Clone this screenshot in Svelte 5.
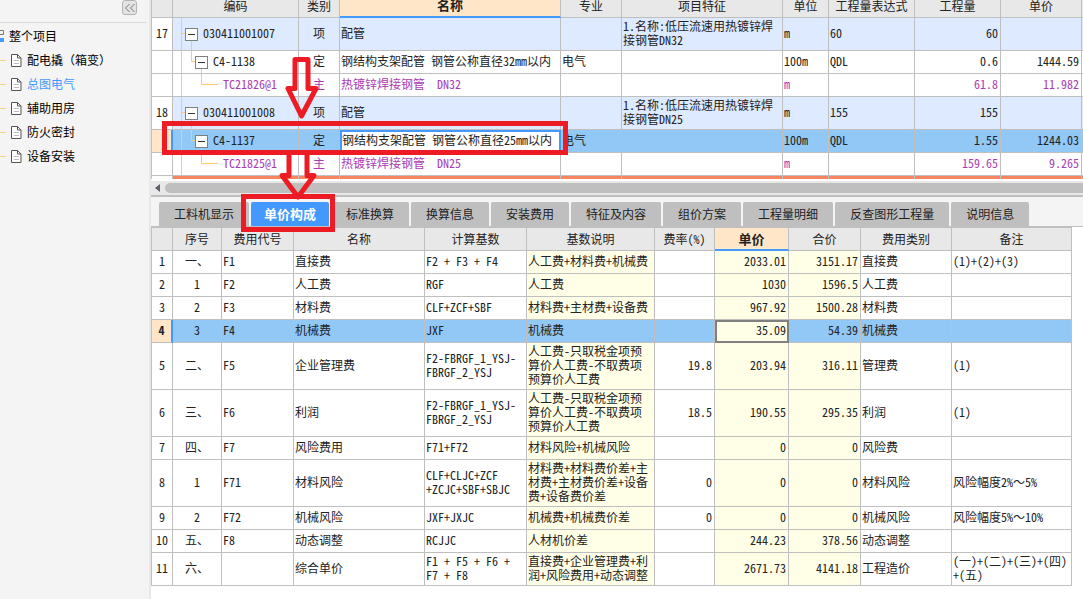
<script lang="ts">
	// Types/constants
	type Kind = 'item' | 'quota' | 'material' | 'section'

	type BillRow = {
		no?: string
		kind: Kind
		code?: string
		type?: string
		name?: string
		major?: string
		feature?: string
		unit?: string
		formula?: string
		quantity?: string
		price?: string
	}

	const projects = ['配电撬（箱变）', '总图电气', '辅助用房', '防火密封', '设备安装']

	const billColumns = ['', '编码', '类别', '名称', '专业', '项目特征', '单位', '工程量表达式', '工程量', '单价', '']

	const billRows: BillRow[] = [
		{ no: '17', kind: 'item', code: '030411001007', type: '项', name: '配管', feature: '1.名称:低压流速用热镀锌焊\n接钢管DN32', unit: 'm', formula: '60', quantity: '60' },
		{ kind: 'quota', code: 'C4-1138', type: '定', name: '钢结构支架配管 钢管公称直径32mm以内', major: '电气', unit: '100m', formula: 'QDL', quantity: '0.6', price: '1444.59' },
		{ kind: 'material', code: 'TC21826@1', type: '主', name: '热镀锌焊接钢管  DN32', unit: 'm', quantity: '61.8', price: '11.982' },
		{ no: '18', kind: 'item', code: '030411001008', type: '项', name: '配管', feature: '1.名称:低压流速用热镀锌焊\n接钢管DN25', unit: 'm', formula: '155', quantity: '155' },
		{ kind: 'quota', code: 'C4-1137', type: '定', name: '钢结构支架配管 钢管公称直径25mm以内', major: '电气', unit: '100m', formula: 'QDL', quantity: '1.55', price: '1244.03' },
		{ kind: 'material', code: 'TC21825@1', type: '主', name: '热镀锌焊接钢管  DN25', unit: 'm', quantity: '159.65', price: '9.265' },
		{ kind: 'section', feature: '1.名称:低压流速用热镀锌焊' },
	]

	const tabs = ['工料机显示', '单价构成', '标准换算', '换算信息', '安装费用', '特征及内容', '组价方案', '工程量明细', '反查图形工程量', '说明信息']

	const feeColumns = ['', '序号', '费用代号', '名称', '计算基数', '基数说明', '费率(%)', '单价', '合价', '费用类别', '备注']

	const overhead = '人工费-只取税金项预\n算价人工费-不取费项\n预算价人工费'

	const feeRows = [
		['一、', 'F1', '直接费', 'F2 + F3 + F4', '人工费+材料费+机械费', '', '2033.01', '3151.17', '直接费', '(1)+(2)+(3)'],
		['1', 'F2', '人工费', 'RGF', '人工费', '', '1030', '1596.5', '人工费', ''],
		['2', 'F3', '材料费', 'CLF+ZCF+SBF', '材料费+主材费+设备费', '', '967.92', '1500.28', '材料费', ''],
		['3', 'F4', '机械费', 'JXF', '机械费', '', '35.09', '54.39', '机械费', ''],
		['二、', 'F5', '企业管理费', 'F2-FBRGF_1_YSJ-\nFBRGF_2_YSJ', overhead, '19.8', '203.94', '316.11', '管理费', '(1)'],
		['三、', 'F6', '利润', 'F2-FBRGF_1_YSJ-\nFBRGF_2_YSJ', overhead, '18.5', '190.55', '295.35', '利润', '(1)'],
		['四、', 'F7', '风险费用', 'F71+F72', '材料风险+机械风险', '', '0', '0', '风险费', ''],
		['1', 'F71', '材料风险', 'CLF+CLJC+ZCF\n+ZCJC+SBF+SBJC', '材料费+材料费价差+主\n材费+主材费价差+设备\n费+设备费价差', '0', '0', '0', '材料风险', '风险幅度2%～5%'],
		['2', 'F72', '机械风险', 'JXF+JXJC', '机械费+机械费价差', '0', '0', '0', '机械风险', '风险幅度5%～10%'],
		['五、', 'F8', '动态调整', 'RCJJC', '人材机价差', '', '244.23', '378.56', '动态调整', ''],
		['六、', '', '综合单价', 'F1 + F5 + F6 +\nF7 + F8', '直接费+企业管理费+利\n润+风险费用+动态调整', '', '2671.73', '4141.18', '工程造价', '(一)+(二)+(三)+(四)\n+(五)'],
	]

	// State
	let activeProject = $state('总图电气')
	let activeTab = $state('单价构成')
	let billRow = $state(4)
	let feeRow = $state(3)
</script>


{#snippet guides(kind: Kind)}
	{#if kind === 'item'}
		<svg class="guides" width="25" height="32">
			<path d="M8.5 0V33M9 15.5h4M18.5 22V33" />
		</svg>
	{:else if kind === 'quota'}
		<svg class="guides" width="35" height="22">
			<path d="M8.5 0V23M18.5 0V10.5H22M28.5 17V23" />
		</svg>
	{:else if kind === 'material'}
		<svg class="guides" width="45" height="22">
			<path d="M8.5 0V23M28.5 0V10.5H45" />
		</svg>
	{/if}
{/snippet}


<div class="app">
	<aside>
		<div class="collapse">
			<button aria-label="收起">
				<svg width="12" height="10" viewBox="0 0 12 10">
					<path d="M5.5 1L1.5 5l4 4M10.5 1l-4 4 4 4" />
				</svg>
			</button>
		</div>

		<nav>
			<a class="root" href="#all">
				<svg width="5" height="14" viewBox="0 0 5 14">
					<path d="M0 1.5h3.500v4H0" fill="none" stroke="#777" />
					<path d="M0 9h4v4H0z" fill="#4499ff" />
				</svg>
				整个项目
			</a>
			{#each projects as project (project)}
				<a
					href="#{project}"
					class:active={project === activeProject}
					onclick={() => (activeProject = project)}
				>
					<span class="branch"></span>
					<svg width="11" height="13" viewBox="0 0 11 13">
						<path d="M.5.5h6L10 4v8.500H.5z" fill="#fff" stroke="#555" />
						<path d="M6.500.5v3.500H10" fill="none" stroke="#555" />
						<path d="M3 6.500h5M3 9.500h5" stroke="#bbb" />
					</svg>
					{project}
				</a>
			{/each}
		</nav>
	</aside>

	<main>
		<section class="bill">
			<table>
				<colgroup>
					<col class="w-no" /><col class="w-code" /><col class="w-type" /><col /><col class="w-major" />
					<col class="w-feature" /><col class="w-unit" /><col class="w-qty" /><col class="w-qty" />
					<col class="w-price" /><col class="w-edge" />
				</colgroup>
				<thead>
					<tr>
						{#each billColumns as column}
							<th class:current={column === '名称'}>{column}</th>
						{/each}
					</tr>
				</thead>
				<tbody>
					{#each billRows as row, i}
						<tr class={row.kind} class:selected={i === billRow} onclick={() => (billRow = i)}>
							<td class="no">{row.no ?? ''}</td>
							<td class="code">
								<div>
									{@render guides(row.kind)}
									{#if row.kind === 'item' || row.kind === 'quota'}
										<button class="toggle" aria-label="折叠"></button>
									{/if}
									<span>{row.code ?? ''}</span>
								</div>
							</td>
							<td class="center">{row.type ?? ''}</td>
							<td class:cursor={i === billRow}>{row.name ?? ''}</td>
							<td>{row.major ?? ''}</td>
							<td>{row.feature ?? ''}</td>
							<td>{row.unit ?? ''}</td>
							<td>{row.formula ?? ''}</td>
							<td class="number">{row.quantity ?? ''}</td>
							<td class="number">{row.price ?? ''}</td>
							<td></td>
						</tr>
					{/each}
				</tbody>
			</table>
		</section>

		<div class="scrollbar">
			<button aria-label="向左滚动"></button>
			<div class="thumb"></div>
		</div>

		<div class="tabs" role="tablist">
			{#each tabs as tab (tab)}
				<button
					role="tab"
					aria-selected={tab === activeTab}
					class:active={tab === activeTab}
					onclick={() => (activeTab = tab)}
				>{tab}</button>
			{/each}
		</div>

		<section class="fees">
			<table>
				<colgroup>
					<col class="w-no" /><col class="w-seq" /><col class="w-symbol" /><col /><col class="w-base" />
					<col class="w-note" /><col class="w-rate" /><col class="w-cost" /><col class="w-total" />
					<col class="w-kind" /><col class="w-remark" />
				</colgroup>
				<thead>
					<tr>
						{#each feeColumns as column}
							<th class:current={column === '单价'}>{column}</th>
						{/each}
					</tr>
				</thead>
				<tbody>
					{#each feeRows as row, i}
						<tr class:selected={i === feeRow} onclick={() => (feeRow = i)}>
							<td class="no">{i + 1}</td>
							{#each row as value, j}
								<td
									class:center={j === 0}
									class:computed={j === 4 || j === 6 || j === 7}
									class:number={j === 5 || j === 6 || j === 7}
									class:cursor={i === feeRow && j === 6}
								>{#each value.split(/(～)/) as part}{#if part === '～'}<span class="full">{part}</span>{:else}{part}{/if}{/each}</td>
							{/each}
						</tr>
					{/each}
				</tbody>
			</table>
		</section>
	</main>

	<svg class="marks" width="410" height="180" viewBox="160 55 410 180">
		<path d="M295 59.500h13V88.500H316L301.500 116L288 88.500H295z" />
		<path d="M289 155V175.500H282L298 197L314 175.500H307V155" />
		<path class="frame" d="M164.500 123.500h401v29h-401z" />
		<path class="frame" d="M243.500 196.500h89v33h-89z" />
	</svg>
</div>


<style>
	:global(body) {
		margin: 0;
		background: #fff;
	}

	.app {
		position: relative;
		display: flex;
		min-height: 100vh;
		overflow: hidden;
		font-family: 'Noto Sans CJK SC', sans-serif;
		font-size: 12px;
		line-height: 14px;
		color: #222;
	}

	button {
		font: inherit;
		padding: 0;
		border: none;
	}

	/* Sidebar */
	aside {
		flex: none;
		box-sizing: border-box;
		width: 151px;
		background: #f4f4f4;
		border-right: 2px solid #e8e8e8;
	}

	.collapse {
		display: flex;
		justify-content: flex-end;
		height: 22px;
		margin-right: 2px;
		padding-right: 10px;
		border-bottom: 1px solid #dcdcdc;

		& button {
			display: grid;
			place-items: center;
			width: 15px;
			height: 15px;
			background: #e4e4e4;
			border: 1px solid #b4b4b4;
			border-radius: 3px;
			box-sizing: border-box;
		}

		& path {
			fill: none;
			stroke: #777;
		}
	}

	nav {
		display: flex;
		flex-direction: column;
		padding-top: 1px;

		& a {
			display: flex;
			align-items: center;
			gap: 5px;
			height: 24px;
			color: #000;
			text-decoration: none;
			white-space: nowrap;
		}

		& a.root {
			gap: 4px;
		}

		& a.active {
			color: #4499ff;
		}
	}

	.branch {
		width: 6px;
		border-top: 1px solid #ffcc80;
	}

	/* Grids */
	main {
		flex: 1;
		min-width: 0;
		display: flex;
		flex-direction: column;
	}

	table {
		width: 100%;
		table-layout: fixed;
		border-spacing: 0;
		border-left: 1px solid #bfbfbf;
		font-feature-settings: 'hwid';
	}

	th,
	td {
		box-sizing: border-box;
		height: 23px;
		padding: 1px 2px 3px 1px;
		border-right: 1px solid #bfbfbf;
		border-bottom: 1px solid #bfbfbf;
		white-space: pre;
		overflow: hidden;
	}

	th {
		padding: 0;
		background: #e8e8e8;
		font-weight: normal;
		text-align: center;
	}

	th.current {
		background: #ffe6c8;
		border-bottom: 2px solid #4499ff;
		font-size: 13px;
		font-weight: bold;
	}

	.no,
	.center {
		padding: 1px 0 3px;
		text-align: center;
	}

	.number {
		text-align: right;
	}

	.full {
		font-feature-settings: normal;
	}

	.selected td {
		background: #92c8f6;
	}

	.selected .no {
		background: #ffe6c8;
		border-right: 2px solid #4499ff;
		font-weight: bold;
	}

	.w-no { width: 21px; }
	.w-code { width: 126px; }
	.w-type { width: 41px; }
	.w-major { width: 61px; }
	.w-feature { width: 161px; }
	.w-unit { width: 46px; }
	.w-qty { width: 86px; }
	.w-price { width: 81px; }
	.w-edge { width: 1px; }
	.w-seq { width: 49px; }
	.w-symbol { width: 72px; }
	.w-base { width: 102px; }
	.w-note { width: 128px; }
	.w-rate { width: 60px; }
	.w-cost { width: 74px; }
	.w-total { width: 72px; }
	.w-kind { width: 91px; }
	.w-remark { width: 120px; }

	/* Bill of quantities */
	.bill {
		height: 179px;
		overflow: hidden;

		& th {
			height: 18px;
			padding-bottom: 6px;
			line-height: 10px;
		}

		& th:last-child,
		& td:last-child {
			padding: 0;
			border-right: none;
		}

		& .item td:not(.no) {
			background: #deeaff;
		}

		& .material td {
			color: #a93bb5;
		}

		& .section td:not(.no) {
			background: #f88560;
		}

		& .selected td.cursor {
			padding: 0 0 3px;
			background: #fff;
			border: 2px solid #4499ff;
		}
	}

	td.code {
		padding: 0;

		& div {
			display: flex;
			align-items: center;
		}

		& span {
			margin-left: 5px;
			padding-bottom: 2px;
		}
	}

	.guides {
		flex: none;
		overflow: visible;
		margin-right: -13px;

		& path {
			fill: none;
			stroke: #ffc878;
		}
	}

	.material .guides {
		margin-right: 0;
	}

	.toggle {
		position: relative;
		flex: none;
		box-sizing: border-box;
		width: 13px;
		height: 13px;
		background: #fff;
		border: 1px solid #808080;

		&::after {
			content: '';
			position: absolute;
			inset: 5px 2px;
			background: #333;
		}
	}

	.scrollbar {
		display: flex;
		align-items: center;
		gap: 5px;
		height: 14px;
		margin-top: 2px;
		padding-left: 4px;
		background: #e8e8e8;
		border-bottom: 2px solid #bfbfbf;

		& button {
			width: 5px;
			height: 8px;
			background: #606068;
			clip-path: polygon(0 50%, 100% 0, 100% 100%);
		}
	}

	.thumb {
		flex: 1;
		height: 10px;
		background: #bfbfbf;
		border-radius: 5px 0 0 5px;
	}

	/* Detail tabs */
	.tabs {
		display: flex;
		gap: 2px;
		padding: 5px 8px 0;
		background: #f4f4f4;
		border-bottom: 1px solid #bfbfbf;

		& button {
			height: 24px;
			padding: 0 15px;
			background: #bfbfbf;
			border-radius: 2px 2px 0 0;
			color: #222;
			white-space: nowrap;
		}

		& button.active {
			padding: 0 13px;
			background: #4499ff;
			color: #fff;
			font-size: 13px;
			font-weight: bold;
		}
	}

	.fees {
		padding-right: 11px;

		& table {
			border-top: 1px solid #bfbfbf;
		}

		& td.computed {
			background: #ffffe8;
		}

		& .selected td.computed:not(.cursor) {
			background: #92c8f6;
		}

		& .selected td.cursor {
			padding: 0 1px 3px;
			border: 2px solid #808080;
		}
	}

	/* Walkthrough arrows and frames */
	.marks {
		position: absolute;
		left: 160px;
		top: 55px;
		pointer-events: none;

		& path {
			fill: none;
			stroke: #ed1c24;
			stroke-width: 5;
			stroke-linejoin: round;
		}

		& .frame {
			stroke-linejoin: miter;
		}
	}
</style>
